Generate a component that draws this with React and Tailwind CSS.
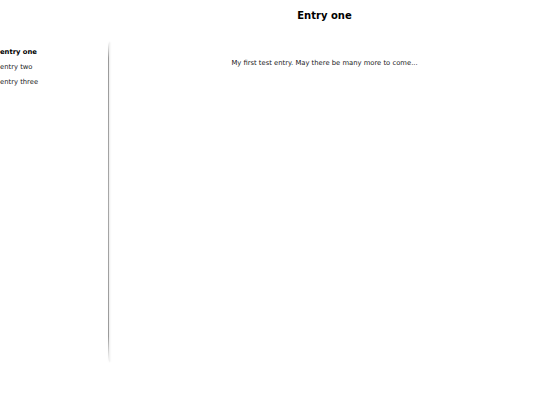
export default function App() {
  return (
    <div className="flex w-[540px] h-[405px] bg-white" style={{ fontFamily: '"DejaVu Sans", Verdana, sans-serif' }}>
      <div className="w-[108px] shrink-0 pt-[45px] text-[6.8px] leading-[15px] text-[#222]">
        <div className="font-bold text-black">entry one</div>
        <div>entry two</div>
        <div>entry three</div>
      </div>
      <div className="w-[1px] shrink-0 mt-[42px] h-[320px] bg-[linear-gradient(to_bottom,rgba(150,150,150,0)_0%,#9a9a9a_5%,#a8a8a8_50%,#9a9a9a_92%,rgba(150,150,150,0)_100%)] shadow-[1px_0_2px_rgba(0,0,0,0.12)]"></div>
      <div className="flex-1 text-center">
        <h1 className="mt-[9px] text-[10px] font-bold leading-[14px] text-black">Entry one</h1>
        <p className="mt-[35px] text-[6.8px] leading-[10px] text-[#222]">My first test entry. May there be many more to come...</p>
      </div>
    </div>
  );
}
